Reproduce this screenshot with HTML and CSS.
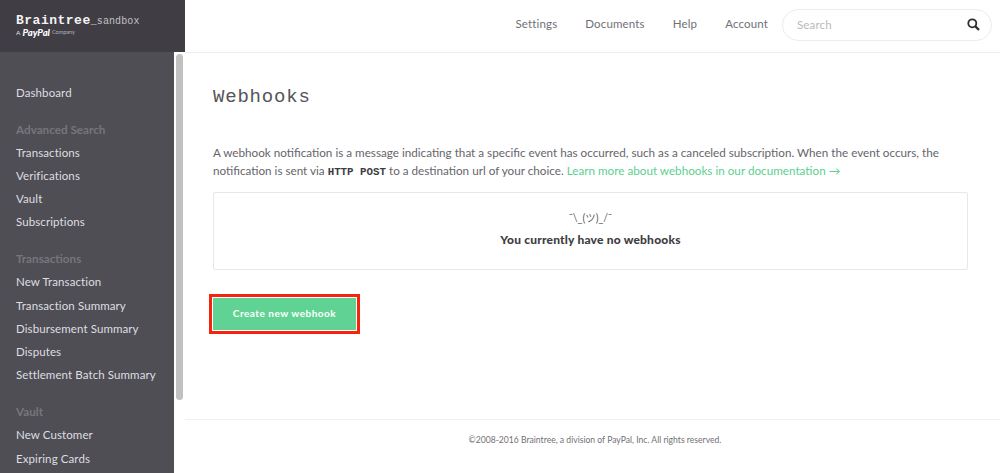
FILE: index.html
```html
<!DOCTYPE html>
<html lang="en">
<head>
<meta charset="utf-8">
<title>Webhooks</title>
<link rel="stylesheet" href="styles.css">
</head>
<body>
<div class="app">
  <aside class="side">
    <div class="brand">
      <div class="brand-name">Braintree<span class="brand-env">_sandbox</span></div>
      <div class="brand-sub"><span>A</span><b>PayPal</b><span class="brand-co">Company</span></div>
    </div>
    <div class="side-body">
      <nav class="nav">
        <ul class="group">
          <li><a>Dashboard</a></li>
        </ul>
        <h4>Advanced Search</h4>
        <ul class="group">
          <li><a>Transactions</a></li>
          <li><a>Verifications</a></li>
          <li><a>Vault</a></li>
          <li><a>Subscriptions</a></li>
        </ul>
        <h4>Transactions</h4>
        <ul class="group">
          <li><a>New Transaction</a></li>
          <li><a>Transaction Summary</a></li>
          <li><a>Disbursement Summary</a></li>
          <li><a>Disputes</a></li>
          <li><a>Settlement Batch Summary</a></li>
        </ul>
        <h4>Vault</h4>
        <ul class="group">
          <li><a>New Customer</a></li>
          <li><a>Expiring Cards</a></li>
        </ul>
      </nav>
      <div class="scrollbar"><div class="thumb"></div></div>
    </div>
  </aside>
  <div class="main">
    <header class="top">
      <a>Settings</a>
      <a>Documents</a>
      <a>Help</a>
      <a>Account</a>
      <div class="search">
        <span>Search</span>
        <svg width="13" height="13" viewBox="0 0 13 13" fill="none" stroke="#2f2e33"><circle cx="5.3" cy="5.3" r="4" stroke-width="1.8"/><path d="M8.4 8.4 12 12" stroke-width="2.3"/></svg>
      </div>
    </header>
    <main class="content">
      <h1>Webhooks</h1>
      <p class="intro">A webhook notification is a message indicating that a specific event has occurred, such as a canceled subscription. When the event occurs, the notification is sent via <code>HTTP POST</code> to a destination url of your choice. <a>Learn more about webhooks in our documentation →</a></p>
      <div class="empty">
        <div class="shrug">¯\_(ツ)_/¯</div>
        <strong>You currently have no webhooks</strong>
      </div>
      <div class="highlight"><button>Create new webhook</button></div>
    </main>
    <footer class="foot">©2008-2016 Braintree, a division of PayPal, Inc. All rights reserved.</footer>
  </div>
</div>
</body>
</html>
```
FILE: styles.css
```css
* { box-sizing: border-box; }
html, body { margin: 0; height: 100%; overflow: hidden; }
body { font-family: Lato, "Noto Sans", "Noto Sans CJK JP", sans-serif; background: #fff; color: #5d5c62; }
.app { display: flex; height: 473px; }

.side { width: 185px; flex: none; display: flex; flex-direction: column; }
.brand { height: 52px; flex: none; background: #403d44; padding: 13px 0 0 16px; color: #fff; }
.brand-name { font: 700 13px/15px "Liberation Mono", monospace; letter-spacing: 0.5px; color: #f2f2f2; white-space: nowrap; }
.brand-env { font-weight: 400; font-size: 10px; letter-spacing: 0.1px; color: #c3c2c6; }
.brand-sub { display: flex; align-items: center; gap: 2px; height: 10px; margin-top: -2px; font-size: 6.5px; color: #e4e4e6; }
.brand-sub b { font-size: 9.5px; font-style: italic; font-weight: 900; color: #fff; }
.brand-co { font-size: 5.5px; color: #b5b4b9; }

.side-body { flex: 1; min-height: 0; display: flex; }
.nav { flex: 1; min-width: 0; overflow: hidden; background: #4f4e55; padding: 28.5px 0 0; }
.scrollbar { width: 11px; flex: none; padding: 2px 2px 0; background: #fff; }
.thumb { height: 346px; border-radius: 4px; background: #c1c1c1; }
.group { list-style: none; margin: 0; padding: 0; }
.group li { height: 23.2px; line-height: 23px; padding-left: 16px; font-size: 11.5px; letter-spacing: 0.1px; color: #dedee1; white-space: nowrap; }
.nav h4 { margin: 14px 0 0; height: 23px; line-height: 23px; padding-left: 16px; font-size: 11.7px; font-weight: 700; letter-spacing: 0; color: #77767c; }

.main { flex: 1; min-width: 0; display: flex; flex-direction: column; }
.top { height: 53px; flex: none; border-bottom: 1px solid #ececec; display: flex; align-items: center; justify-content: flex-end; padding: 0 8px 3px 0; font-size: 11.5px; letter-spacing: 0.15px; color: #717076; }
.top a { margin-right: 28px; padding-bottom: 2px; }
.top a:nth-child(4) { margin-right: 14px; }
.search { width: 210px; height: 32px; border: 1px solid #ececec; border-radius: 16px; display: flex; align-items: center; justify-content: space-between; padding: 0 11px 0 14px; color: #b9b9bc; }
.search svg { display: block; }

.content { flex: 1; padding: 32px 32px 0 28px; }
h1 { margin: 0; font: 400 19px/24px "Liberation Mono", monospace; letter-spacing: 0.8px; color: #55545a; }
.intro { margin: 35px 0 0; font-size: 11.7px; line-height: 17.5px; color: #66656b; }
.intro code { font: 700 10.8px/1 "Liberation Mono", monospace; color: #3c3b40; }
.intro a { color: #5cd08f; }
.empty { margin-top: 13px; height: 78px; border: 1px solid #e8e8e8; border-radius: 2px; display: flex; flex-direction: column; align-items: center; padding-top: 17px; font-size: 12px; color: #5d5c62; }
.shrug { line-height: 16px; font-size: 10.5px; }
.empty strong { margin-top: 5px; line-height: 17px; font-weight: 900; letter-spacing: 0.2px; color: #3e3d42; }
.highlight { margin: 24px 0 0 -4px; width: 151px; height: 40px; border: 3px solid #f4240e; padding: 1px; }
.highlight button { display: block; width: 100%; height: 100%; border: 0; padding: 0 0 2px; background: #60d394; color: #fff; font: 700 10px Lato, sans-serif; letter-spacing: 0.5px; }

.foot { flex: none; height: 54px; border-top: 1px solid #f1f1f1; text-align: center; padding: 13px 0 0 5px; font-size: 8.6px; line-height: 14px; color: #717076; }
```
